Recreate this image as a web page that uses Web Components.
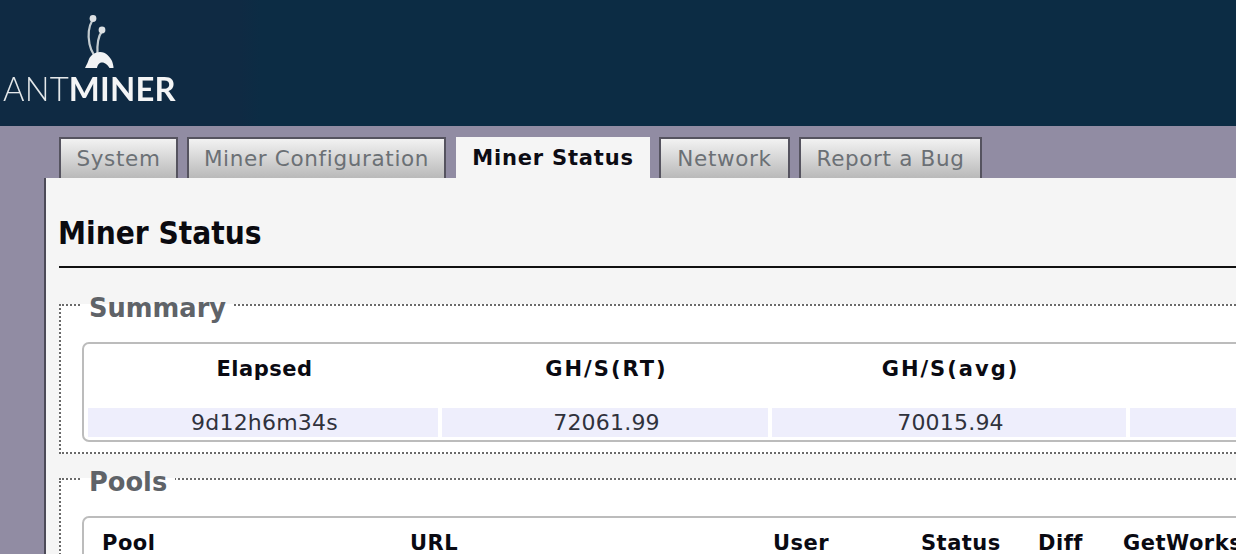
<!DOCTYPE html>
<html>
<head>
<meta charset="utf-8">
<title>Miner Status</title>
<style>
html, body { margin: 0; height: 554px; overflow: hidden; background: #918ca3; }
body { font-family: "DejaVu Sans", Verdana, sans-serif; display: flex; flex-direction: column; }
</style>
</head>
<body>
<am-header></am-header>
<am-tabs>
  <am-tab style="--w:119px">System</am-tab>
  <am-tab style="--w:259px">Miner Configuration</am-tab>
  <am-tab style="--w:194px;margin-left:1px" active>Miner Status</am-tab>
  <am-tab style="--w:131px">Network</am-tab>
  <am-tab style="--w:183px">Report a Bug</am-tab>
</am-tabs>
<am-panel heading="Miner Status">
  <am-fieldset legend="Summary">
    <am-table>
      <am-row head>
        <am-cell style="--w:350px">Elapsed</am-cell>
        <am-cell style="--w:326px;letter-spacing:2px">GH/S(RT)</am-cell>
        <am-cell style="--w:354px;letter-spacing:2px">GH/S(avg)</am-cell>
        <am-cell style="--w:200px"></am-cell>
      </am-row>
      <am-row>
        <am-cell style="--w:350px">9d12h6m34s</am-cell>
        <am-cell style="--w:326px">72061.99</am-cell>
        <am-cell style="--w:354px">70015.94</am-cell>
        <am-cell style="--w:200px"></am-cell>
      </am-row>
    </am-table>
  </am-fieldset>
  <am-fieldset legend="Pools">
    <am-table>
      <am-row head left>
        <am-cell style="--w:304px">Pool</am-cell>
        <am-cell style="--w:359px">URL</am-cell>
        <am-cell style="--w:144px">User</am-cell>
        <am-cell style="--w:113px">Status</am-cell>
        <am-cell style="--w:81px">Diff</am-cell>
        <am-cell style="--w:200px">GetWorks</am-cell>
      </am-row>
    </am-table>
  </am-fieldset>
</am-panel>
<script>
class AmHeader extends HTMLElement {
  constructor() {
    super();
    const shadow = this.attachShadow({ mode: "open" });
    shadow.innerHTML = `
    <style>
      :host { display: block; height: 126px; flex: none;
        background: linear-gradient(90deg, #0f2a43 0, #0f2a43 240px, #0c2c44 260px); }
      .logo { display: flex; flex-direction: column; align-items: flex-start; padding: 14px 0 0 3px; }
      svg { display: block; margin-left: 81px; filter: blur(0.4px); }
      .name { font-family: "Lato", sans-serif; font-size: 32.8px; line-height: 30px; margin-top: 5px; color: #e4e8ea; letter-spacing: 0.2px; white-space: nowrap; filter: blur(0.3px); }
      .name span { font-weight: 300; }
      .name b { font-weight: 700; color: #f4f5f6; }
    </style>
    <div class="logo">
      <svg width="31" height="55" viewBox="0 0 31 55">
        <g fill="none" stroke="#c4ccd0" stroke-linecap="round" stroke-width="2.2">
          <path d="M8.500 6 C5 12 3.500 20 5.500 30 C6.500 35 8 38 10 41"/>
          <path d="M17.500 18 C14.500 22 13 30 13.500 40"/>
        </g>
        <circle cx="9" cy="4.500" r="3.400" fill="#dde1e4"/>
        <circle cx="18" cy="16" r="3.400" fill="#dde1e4"/>
        <path d="M1 54 C3 50 4 48 5 45 C7 41 11 38 16 38 C22 38 26 43 28 47 C29 50 29.500 52 29.500 54 L25.500 54 C24 51 21 48.500 18 48.500 C15 48.500 13.500 51 13 54 Z" fill="#f2f3f4"/>
      </svg>
      <div class="name"><span>ANT</span><b>MINER</b></div>
    </div>`;
  }
}

class AmTabs extends HTMLElement {
  constructor() {
    super();
    const shadow = this.attachShadow({ mode: "open" });
    shadow.innerHTML = `
    <style>
      :host { display: flex; flex: none; height: 41px; margin-top: 11px; padding-left: 59px; gap: 9px; }
    </style>
    <slot></slot>`;
  }
}

class AmTab extends HTMLElement {
  constructor() {
    super();
    const shadow = this.attachShadow({ mode: "open" });
    shadow.innerHTML = `
    <style>
      :host { display: flex; flex: none; box-sizing: border-box; width: var(--w); height: 41px;
        align-items: center; justify-content: center; font-size: 21.5px; letter-spacing: 0.65px; color: #6b7075;
        border: 2px solid #55535f; border-bottom: 0;
        background: linear-gradient(#f2f2f2, #b9b9b9); white-space: nowrap; }
      :host([active]) { border: 0; background: #f5f5f5; color: #0c0c14; font-weight: bold; font-size: 21px; letter-spacing: 0.8px; }
    </style>
    <slot></slot>`;
  }
}

class AmPanel extends HTMLElement {
  constructor() {
    super();
    const shadow = this.attachShadow({ mode: "open" });
    shadow.innerHTML = `
    <style>
      :host { display: block; flex: 1; margin-left: 44px; width: 1400px; border-left: 2px solid #4c4a58;
        background: #f5f5f5; padding: 34px 0 0 13px; }
      h2 { margin: 0; font: bold 31.3px/42px "DejaVu Sans Condensed", "DejaVu Sans", sans-serif; color: #0a0a0f;
        text-indent: -1px; padding-bottom: 12px; border-bottom: 2px solid #111; }
      .body { padding-top: 19px; display: flex; flex-direction: column; gap: 7px; }
    </style>
    <h2></h2>
    <div class="body"><slot></slot></div>`;
    shadow.querySelector("h2").textContent = this.getAttribute("heading");
  }
}

class AmFieldset extends HTMLElement {
  constructor() {
    super();
    const shadow = this.attachShadow({ mode: "open" });
    shadow.innerHTML = `
    <style>
      :host { display: block; }
      fieldset { margin: 0; padding: 19px 11px 10px 21px; border: 2px dotted #6a6a6a; background: #fff; }
      legend { padding: 6px 8px 0 7px; font-size: 25.7px; line-height: 30px; font-weight: bold; color: #5f6368; }
    </style>
    <fieldset><legend></legend><slot></slot></fieldset>`;
    shadow.querySelector("legend").textContent = this.getAttribute("legend");
  }
}

class AmTable extends HTMLElement {
  constructor() {
    super();
    const shadow = this.attachShadow({ mode: "open" });
    shadow.innerHTML = `
    <style>
      :host { display: flex; flex-direction: column; border: 2px solid #bcbcbc; border-radius: 7px;
        padding: 4px 4px 3px; background: #fff; }
    </style>
    <slot></slot>`;
  }
}

class AmRow extends HTMLElement {
  constructor() {
    super();
    const shadow = this.attachShadow({ mode: "open" });
    shadow.innerHTML = `
    <style>
      :host { display: flex; gap: 4px; color: #30323c; font-size: 22px; letter-spacing: 0.2px; height: 29px; }
      :host([head]) { height: 60px; font-weight: bold; color: #0a0a12; font-size: 21px; letter-spacing: 0.5px; }
    </style>
    <slot></slot>`;
  }
}

class AmCell extends HTMLElement {
  constructor() {
    super();
    const shadow = this.attachShadow({ mode: "open" });
    shadow.innerHTML = `
    <style>
      :host { display: flex; flex: none; box-sizing: border-box; width: var(--w); align-items: center;
        justify-content: center; padding-left: 3px; background: #eeeefc; white-space: nowrap; }
      :host-context(am-row[head]) { background: none; padding-bottom: 18px; }
      :host-context(am-row[left]) { justify-content: flex-start; padding-left: 14px; }
    </style>
    <slot></slot>`;
  }
}

customElements.define("am-header", AmHeader);
customElements.define("am-tabs", AmTabs);
customElements.define("am-tab", AmTab);
customElements.define("am-panel", AmPanel);
customElements.define("am-fieldset", AmFieldset);
customElements.define("am-table", AmTable);
customElements.define("am-row", AmRow);
customElements.define("am-cell", AmCell);
</script>
</body>
</html>
